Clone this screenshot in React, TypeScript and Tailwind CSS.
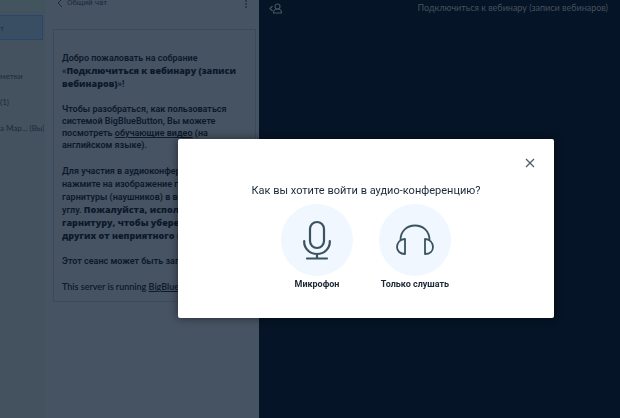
import type { ReactNode } from "react";

interface AudioOptionProps {
  label: string;
  children: ReactNode;
}

function AudioOption({ label, children }: AudioOptionProps) {
  return (
    <button type="button" className="flex w-[72px] flex-col items-center text-[9px] leading-4 font-bold text-[#1d2935]">
      <span className="flex h-[72px] w-[72px] items-center justify-center rounded-full bg-[#f0f7ff]">{children}</span>
      <span className="whitespace-nowrap">{label}</span>
    </button>
  );
}

function MicrophoneIcon() {
  return (
    <svg viewBox="0 0 28 40" className="h-10 w-7" fill="none" stroke="#3b5261" strokeWidth="2.2" strokeLinecap="round" aria-hidden="true">
      <rect x="7" y="2" width="14" height="26" rx="7" />
      <path d="M1.200 21v1a12.800 12 0 0 0 25.600 0v-1M14 34v4M4 38.500h20" />
    </svg>
  );
}

function HeadphonesIcon() {
  return (
    <svg viewBox="0 0 38 32" className="h-8 w-[38px]" fill="none" stroke="#3b5261" strokeWidth="1.8" strokeLinejoin="round" aria-hidden="true">
      <path d="M4.500 16C4.500 7 11 1.500 19 1.500S33.500 7 33.500 16" />
      <path d="M9 15v15C4 30 1 27 1 23s3-8 8-8zM29 15v15c5 0 8-3 8-7s-3-8-8-8z" />
    </svg>
  );
}

function Strong({ children }: { children: ReactNode }) {
  return <b className="font-['Open_Sans',sans-serif] leading-none font-extrabold">{children}</b>;
}

function Sidebar() {
  return (
    <aside className="w-[45px] shrink-0 overflow-hidden border-r border-[#42505f] bg-[#44515f] font-[Lato,sans-serif] text-[8px] leading-3 whitespace-nowrap text-[#1b2a3c]">
      <div className="h-[11px] bg-[#42555f]" />
      <div className="mt-1 mr-px flex h-[25px] items-center border border-l-0 border-[#26466a] bg-[#3a4e63]">т</div>
      <div className="mt-[30px]">метки</div>
      <div className="mt-[14px]">(1)</div>
      <div className="mt-[14px]">а Мар... (Вы)</div>
    </aside>
  );
}

function ChatPanel() {
  return (
    <section className="w-[214px] shrink-0 bg-[#465362] pr-[3px] pl-2 text-[#0c192a]">
      <header className="flex h-[29px] items-start justify-between pr-2 pl-1">
        <button type="button" className="-mt-1 flex items-center gap-1 text-[8px] leading-[14px] text-[#1b2a3c]">
          <svg viewBox="0 0 6 8" className="h-2 w-1.5" fill="none" stroke="currentColor" aria-hidden="true">
            <path d="M5 0 1 4l4 4" />
          </svg>
          Общий чат
        </button>
        <button type="button" aria-label="Параметры чата">
          <svg viewBox="0 0 4 8" className="h-2 w-1" fill="currentColor" aria-hidden="true">
            <circle cx="2" cy="1" r=".8" />
            <circle cx="2" cy="4" r=".8" />
            <circle cx="2" cy="7" r=".8" />
          </svg>
        </button>
      </header>
      <div className="flex flex-col gap-3 border border-[#3d4a59] px-2 pt-[22px] pb-2 text-[9px] leading-[13px] font-semibold whitespace-nowrap">
        <p>
          Добро пожаловать на собрание
          <br />
          «<Strong>Подключиться к вебинару (записи</Strong>
          <br />
          <Strong>вебинаров)</Strong>»!
        </p>
        <p className="mb-0.5 leading-3">
          Чтобы разобраться, как пользоваться
          <br />
          системой BigBlueButton, Вы можете
          <br />
          посмотреть <a href="#tutorials" className="underline">обучающие видео</a> (на
          <br />
          английском языке).
        </p>
        <p>
          Для участия в аудиоконференции
          <br />
          нажмите на изображение головной
          <br />
          гарнитуры (наушников) в верхнем
          <br />
          углу. <Strong>Пожалуйста, используйте</Strong>
          <br />
          <Strong>гарнитуру, чтобы уберечь</Strong>
          <br />
          <Strong>других от неприятного шума.</Strong>
        </p>
        <p>Этот сеанс может быть записан.</p>
        <p className="font-[Lato,sans-serif]">
          This server is running <a href="#bigbluebutton" className="underline">BigBlueButton</a>.
        </p>
      </div>
    </section>
  );
}

function AudioModal() {
  return (
    <div className="fixed inset-0 flex items-start pt-[139px] pr-[66px] pl-[178px]">
      <div role="dialog" aria-labelledby="audio-title" className="w-full rounded-xs bg-white pt-[18px] pb-[26px] shadow-[0_0_8px_rgba(0,0,0,0.5)]">
        <div className="flex justify-end pr-[18px]">
          <button type="button" aria-label="Закрыть">
            <svg viewBox="0 0 12 12" className="h-3 w-3" fill="none" stroke="#4e5a66" strokeWidth="1.2" aria-hidden="true">
              <path d="m2 2 8 8M10 2l-8 8" />
            </svg>
          </button>
        </div>
        <h2 id="audio-title" className="mt-3 text-center text-[11px] leading-5 text-[#1b2a3a]">
          Как вы хотите войти в аудио-конференцию?
        </h2>
        <div className="mt-[3px] flex justify-center gap-[26px]">
          <AudioOption label="Микрофон">
            <MicrophoneIcon />
          </AudioOption>
          <AudioOption label="Только слушать">
            <HeadphonesIcon />
          </AudioOption>
        </div>
      </div>
    </div>
  );
}

export default function App() {
  return (
    <div className="flex h-screen overflow-hidden bg-[#051426] font-[Roboto,sans-serif]">
      <Sidebar />
      <ChatPanel />
      <main className="min-w-0 flex-1">
        <header className="flex items-start justify-between pr-3 pl-2.5 text-[#46525f]">
          <button type="button" aria-label="Участники" className="pt-[3px]">
            <svg viewBox="0 0 14 11" className="h-[11px] w-3.5" fill="none" stroke="currentColor" strokeWidth="1.2" aria-hidden="true">
              <path d="M3.500 3 1 5.500 3.500 8" />
              <circle cx="8.500" cy="3.500" r="2.500" />
              <path d="M4.500 10c0-3 1-4 4-4s4 1 4 4z" />
            </svg>
          </button>
          <h1 className="font-[Lato,sans-serif] text-[9px] leading-4 whitespace-nowrap">Подключиться к вебинару (записи вебинаров)</h1>
        </header>
      </main>
      <AudioModal />
    </div>
  );
}
